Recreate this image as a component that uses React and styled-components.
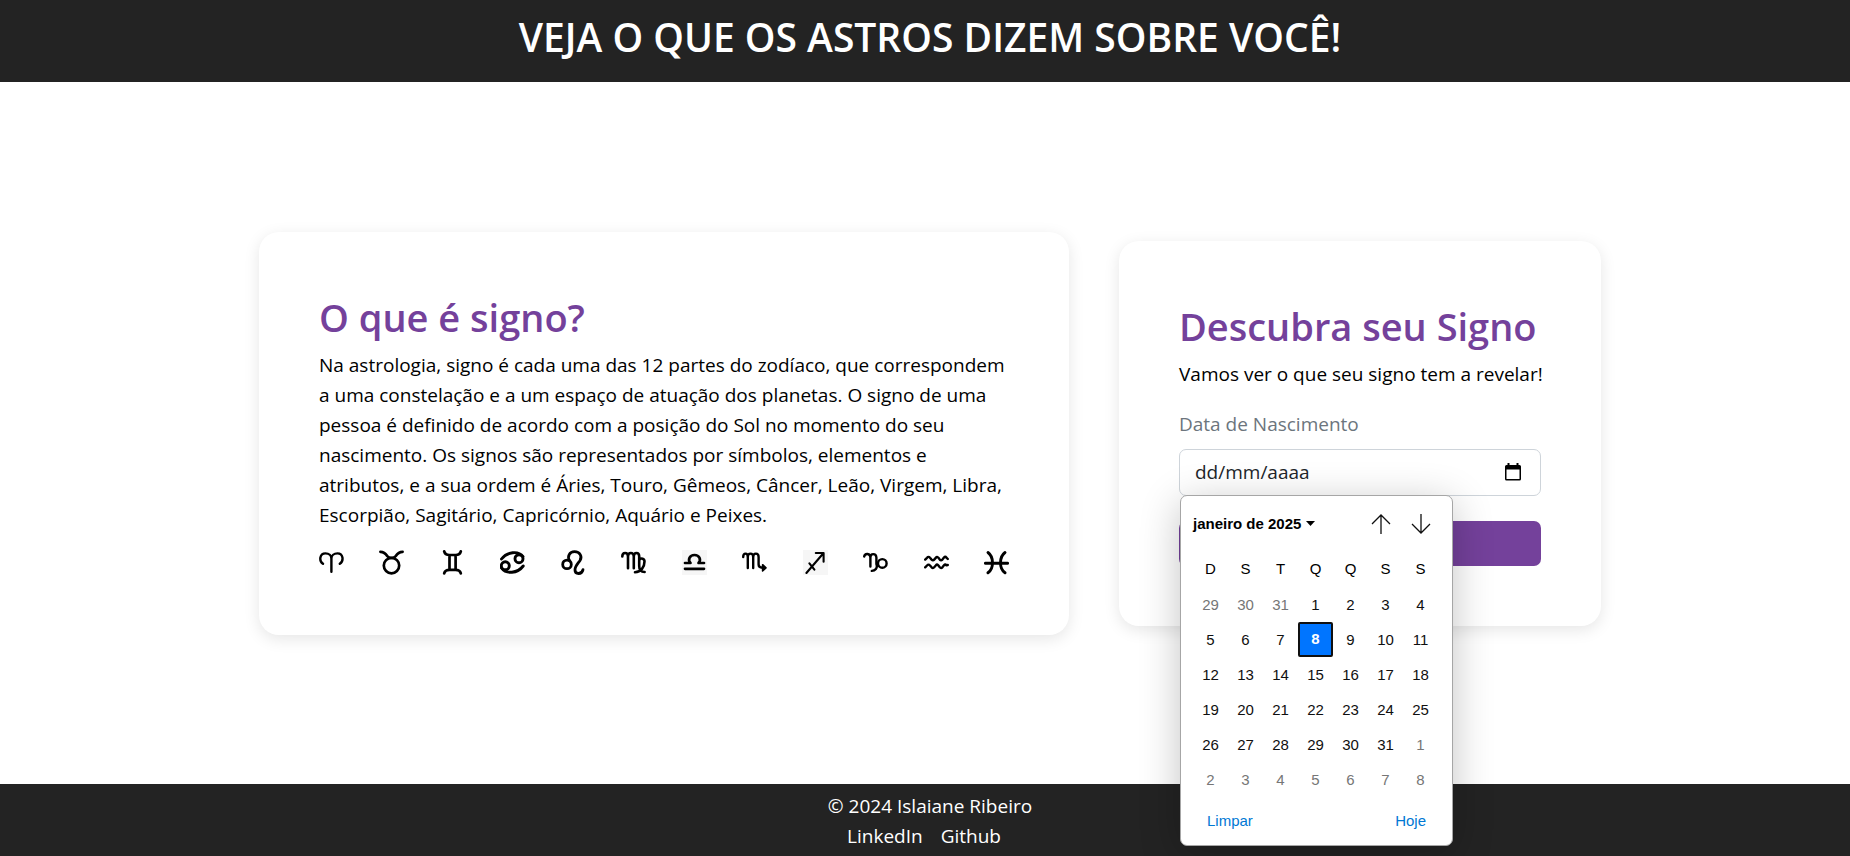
import React from "react";
import styled, { createGlobalStyle } from "styled-components";

const GlobalStyle = createGlobalStyle`
  *, *::before, *::after { box-sizing: border-box; }
  body { margin: 0; background: #fff; }
  h1, h2, p { margin: 0; }
  button, input { font: inherit; }
`;

const Page = styled.div`
  display: flex;
  flex-direction: column;
  min-height: 100vh;
  font-family: "Open Sans", "Noto Sans", sans-serif;
  font-size: 19px;
  line-height: 30px;
  color: #000;
`;

const Header = styled.header`
  padding: 13px 0 21px 10px;
  background: #232323;
  color: #fff;
  text-align: center;
`;

const Title = styled.h1`
  font-size: 39px;
  line-height: 48px;
  font-weight: 600;
`;

const Main = styled.main`
  flex: 1;
  display: flex;
  align-items: center;
  justify-content: center;
  gap: 50px;
  padding-left: 10px;
`;

const Card = styled.section`
  flex: 0 1 ${(p) => p.$basis};
  min-width: 0;
  padding: 60px;
  border-radius: 20px;
  background: #fff;
  box-shadow: 0 4px 16px rgba(0, 0, 0, 0.1);
`;

const CardTitle = styled.h2`
  margin-bottom: 8px;
  font-size: 38px;
  line-height: 50px;
  font-weight: 600;
  color: #74419b;
  white-space: nowrap;
`;

const Lead = styled.p`
  white-space: nowrap;
`;

const SignRow = styled.div`
  display: flex;
  justify-content: space-between;
  margin-top: 20px;
`;

const SignIcon = styled.svg`
  width: 25px;
  height: 25px;
  fill: none;
  stroke: #000;
  stroke-linecap: round;
  stroke-linejoin: round;
  background: ${(p) => (p.$shaded ? "#f6f6f6" : "transparent")};
`;

const Form = styled.form`
  display: flex;
  flex-direction: column;
  margin-top: 20px;
`;

const Label = styled.label`
  margin-bottom: 10px;
  color: #6c757d;
`;

const Field = styled.div`
  position: relative;
  margin-bottom: 25px;
`;

const DateBox = styled.div`
  display: flex;
  align-items: center;
  height: 47px;
  padding: 0 18px 0 15px;
  border: 1px solid #ced4da;
  border-radius: 7px;
  background: #fff;
`;

const DateInput = styled.input`
  flex: 1;
  min-width: 0;
  padding: 0;
  border: 0;
  outline: 0;
  background: transparent;
  color: #212529;
  &::placeholder { color: #212529; opacity: 1; }
`;

const IconButton = styled.button`
  display: flex;
  align-items: center;
  justify-content: center;
  width: ${(p) => p.$size};
  height: ${(p) => p.$size};
  padding: 0;
  border: 0;
  background: transparent;
  color: #000;
`;

const Submit = styled.button`
  height: 45px;
  border: 0;
  border-radius: 7px;
  background: #74419b;
`;

const Popup = styled.div`
  position: absolute;
  top: 46px;
  left: 1px;
  z-index: 1;
  width: 273px;
  padding: 0 12px;
  border: 1px solid #a6a6a6;
  border-radius: 7px;
  background: #fff;
  box-shadow: 0 8px 40px rgba(0, 0, 0, 0.24);
  font-family: "Liberation Sans", Arial, sans-serif;
  font-size: 15px;
  line-height: 20px;
`;

const PopupHeader = styled.div`
  display: flex;
  align-items: center;
  width: 245px;
  height: 56px;
`;

const MonthButton = styled.button`
  display: flex;
  align-items: center;
  gap: 5px;
  margin-right: auto;
  padding: 0;
  border: 0;
  background: transparent;
  color: #000;
  font-weight: 700;
  white-space: nowrap;
`;

const Arrows = styled.div`
  display: flex;
  gap: 5px;
`;

const Days = styled.table`
  border-collapse: collapse;
  table-layout: fixed;
  width: 245px;
  text-align: center;

  th, td {
    width: 35px;
    height: 35px;
    padding: 0;
    font-weight: 400;
  }
`;

const Day = styled.button`
  display: block;
  width: 35px;
  height: 35px;
  padding: ${(p) => (p.$selected ? "0" : "2px 0 0")};
  border: ${(p) => (p.$selected ? "2px solid #101010" : "0")};
  border-radius: 2px;
  background: ${(p) => (p.$selected ? "#0075ff" : "transparent")};
  color: ${(p) => (p.$selected ? "#fff" : p.$outside ? "#767676" : "#101010")};
  font-weight: ${(p) => (p.$selected ? 700 : 400)};
`;

const PopupFooter = styled.div`
  display: flex;
  justify-content: space-between;
  align-items: center;
  height: 48px;
  padding: 0 14px;
`;

const TextButton = styled.button`
  padding: 0;
  border: 0;
  background: transparent;
  color: #0078d4;
`;

const Footer = styled.footer`
  padding: 7px 0 5px 10px;
  background: #232323;
  color: #fff;
  text-align: center;
`;

const Links = styled.nav`
  display: flex;
  justify-content: center;
  gap: 18px;
  padding-right: 12px;
`;

const FooterLink = styled.a`
  color: #fff;
  text-decoration: none;
`;

const SIGNS = [
  { name: "Áries", width: 2.4, art: <path d="M4 13.8C-.2 11 .5 3.4 6.5 3.4C10 3.4 12.4 5.5 12.4 8.5V21.7M20.8 13.8C25 11 24.4 3.4 18.4 3.4C15 3.4 12.4 5.5 12.4 8.5" /> },
  { name: "Touro", width: 2.7, art: <><circle cx="12.5" cy="15.6" r="7.7" /><path d="M1.4 1.8C5.5 1.8 7 4 8.2 6Q9.5 8 12.5 8Q15.5 8 16.8 6C18 4 19.5 1.8 23.6 1.8" /></> },
  { name: "Gêmeos", width: 2.7, art: <path d="M4.2 1.4C4.8 4 7 5 9.5 5H15.6C18.2 5 20.2 4 20.8 1.4M4.2 23.4C4.8 20.8 7 19.9 9.5 19.9H15.6C18.2 19.9 20.2 20.8 20.8 23.4M9.5 5V20M15.6 5V20" /> },
  { name: "Câncer", width: 2.9, art: <><circle cx="19" cy="8.7" r="4" /><circle cx="5.3" cy="15.8" r="4" /><path d="M1.5 9C7 1.5 18.5 .5 23 6.5M23.2 16C17.5 23.5 6 24.5 1.5 18" /></> },
  { name: "Leão", width: 2.8, art: <><circle cx="6" cy="14.4" r="4.3" /><path d="M8.6 10.8C6 6.5 8.5 1.7 13.5 1.7C19 1.7 21.5 6.5 19 10.5C17 13.5 14 16 14 20C14 24.5 20.8 25 22 19.6" /></> },
  { name: "Virgem", width: 2.6, art: <path d="M1.3 6.5C1.3 1.8 7 1.8 7 6.5V18.2M7 6.5C7 1.8 12.8 1.8 12.8 6.5V18.2M12.8 6.5C12.8 1.8 18.2 1.8 18.2 6.5V16C18.2 20 20 22 23.6 22M18.2 10C20 7.5 23.5 8.5 23.5 11.5C23.5 17 20 22.2 14 22.2" /> },
  { name: "Libra", width: 2.7, shaded: true, art: <path d="M3 18.8H22M3 13H8.5C5.5 10 7.5 5 12.5 5S19.5 10 16.5 13H22" /> },
  { name: "Escorpião", width: 2.4, art: <><path d="M1.2 7C1.2 2.5 5.8 2.5 5.8 7V18M5.8 7C5.8 2.5 11.2 2.5 11.2 7V18M11.2 7C11.2 2.5 16.6 2.5 16.6 7V14.5Q16.6 17.7 20.5 17.7" /><path d="M20.6 14.7L24 17.8L20.6 20.9Z" fill="#000" strokeWidth="1.6" /></> },
  { name: "Sagitário", width: 2.1, shaded: true, art: <path d="M3.4 23L20.6 3M12.8 3H20.6V11.8M6.4 13.3L11.4 19.7" /> },
  { name: "Capricórnio", width: 2.4, art: <><path d="M1.2 6.5C1.8 3 7.4 3 7.4 7.5V16.6M7.4 7.5C7.4 3 13 3 13.4 7.5V14C15 18 12 20.9 8.8 20.9" /><circle cx="19.3" cy="13.4" r="4.3" /></> },
  { name: "Aquário", width: 2.4, art: <path d="M1.2 9.6L3 7.8Q4.5 6 6 7.8L7.6 9.6Q9 11 10.2 9.6L12 7.6Q13 6 14.4 7.8L15.8 9.6Q17 11 18.4 9.6L20 7.6Q21.3 6 22.4 7.6L23.8 9M1.2 17.3L3 15.5Q4.5 13.7 6 15.5L7.6 17.3Q9 18.7 10.2 17.3L12 15.3Q13 13.7 14.4 15.5L15.8 17.3Q17 18.7 18.4 17.3L20 15.3Q21.3 13.7 22.4 15.3L23.8 15" /> },
  { name: "Peixes", width: 2.9, art: <path d="M1.4 13.3H23.6M4 2.5C10 7 10 18.5 4 22.8M21 2.5C15 7 15 18.5 21 22.8" /> },
];

const WEEKDAYS = ["D", "S", "T", "Q", "Q", "S", "S"];

// Six weeks starting on Sunday, 29 December 2024.
const WEEKS = Array.from({ length: 6 }, (_, week) =>
  Array.from({ length: 7 }, (_, day) => {
    const date = new Date(2024, 11, 29 + week * 7 + day);
    return { number: date.getDate(), month: date.getMonth() };
  })
);

function Calendar() {
  return (
    <Popup role="dialog" aria-label="Calendário">
      <PopupHeader>
        <MonthButton type="button">
          janeiro de 2025
          <svg width="9" height="5" viewBox="0 0 9 5"><path d="M0 0H9L4.5 5Z" /></svg>
        </MonthButton>
        <Arrows>
          <IconButton $size="35px" type="button" aria-label="Mês anterior">
            <svg width="20" height="20" viewBox="0 0 20 20" fill="none" stroke="#101010" strokeWidth="1.3"><path d="M10 20V1M1 10L10 1L19 10" /></svg>
          </IconButton>
          <IconButton $size="35px" type="button" aria-label="Próximo mês">
            <svg width="20" height="20" viewBox="0 0 20 20" fill="none" stroke="#101010" strokeWidth="1.3"><path d="M10 0V19M1 10L10 19L19 10" /></svg>
          </IconButton>
        </Arrows>
      </PopupHeader>
      <Days>
        <thead>
          <tr>{WEEKDAYS.map((d, i) => <th key={i} scope="col">{d}</th>)}</tr>
        </thead>
        <tbody>
          {WEEKS.map((week, w) => (
            <tr key={w}>
              {week.map((d, i) => (
                <td key={i}>
                  <Day type="button" $outside={d.month !== 0} $selected={d.month === 0 && d.number === 8}>{d.number}</Day>
                </td>
              ))}
            </tr>
          ))}
        </tbody>
      </Days>
      <PopupFooter>
        <TextButton type="button">Limpar</TextButton>
        <TextButton type="button">Hoje</TextButton>
      </PopupFooter>
    </Popup>
  );
}

export default function App() {
  return (
    <Page>
      <GlobalStyle />
      <Header>
        <Title>VEJA O QUE OS ASTROS DIZEM SOBRE VOCÊ!</Title>
      </Header>
      <Main>
        <Card $basis="810px">
          <CardTitle>O que é signo?</CardTitle>
          <p>
            Na astrologia, signo é cada uma das 12 partes do zodíaco, que correspondem a uma
            constelação e a um espaço de atuação dos planetas. O signo de uma pessoa é definido
            de acordo com a posição do Sol no momento do seu nascimento. Os signos são
            representados por símbolos, elementos e atributos, e a sua ordem é Áries, Touro,
            Gêmeos, Câncer, Leão, Virgem, Libra, Escorpião, Sagitário, Capricórnio, Aquário e
            Peixes.
          </p>
          <SignRow>
            {SIGNS.map((s) => (
              <SignIcon key={s.name} viewBox="0 0 25 25" strokeWidth={s.width} $shaded={s.shaded} role="img" aria-label={s.name}>
                {s.art}
              </SignIcon>
            ))}
          </SignRow>
        </Card>
        <Card $basis="482px">
          <CardTitle>Descubra seu Signo</CardTitle>
          <Lead>Vamos ver o que seu signo tem a revelar!</Lead>
          <Form>
            <Label htmlFor="birth">Data de Nascimento</Label>
            <Field>
              <DateBox>
                <DateInput id="birth" type="text" placeholder="dd/mm/aaaa" />
                <IconButton $size="18px" type="button" aria-label="Abrir calendário">
                  <svg width="18" height="18" viewBox="0 0 18 18">
                    <path d="M3.5 0H5.5V2H12.5V0H14.5V2H15.5Q17 2 17 3.5V16Q17 17.5 15.5 17.5H2.5Q1 17.5 1 16V3.5Q1 2 2.5 2H3.5ZM2.5 6.5V16H15.5V6.5Z" fillRule="evenodd" />
                  </svg>
                </IconButton>
              </DateBox>
              <Calendar />
            </Field>
            <Submit type="submit" aria-label="Descobrir" />
          </Form>
        </Card>
      </Main>
      <Footer>
        <p>© 2024 Islaiane Ribeiro</p>
        <Links>
          <FooterLink href="#linkedin">LinkedIn</FooterLink>
          <FooterLink href="#github">Github</FooterLink>
        </Links>
      </Footer>
    </Page>
  );
}
